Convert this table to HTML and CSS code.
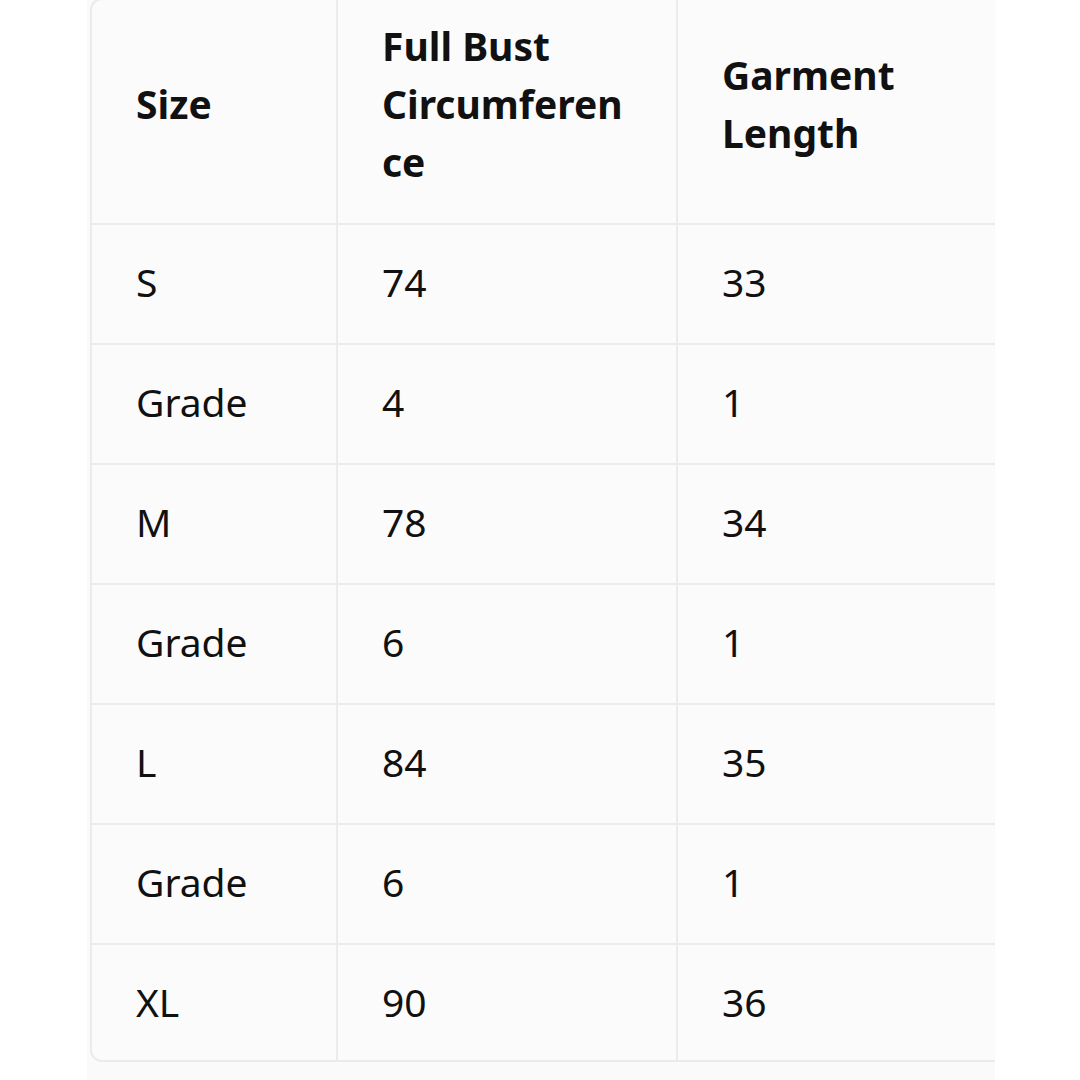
FILE: index.html
```html
<!DOCTYPE html>
<html>
<head>
<meta charset="utf-8">
<link rel="stylesheet" href="styles.css">
</head>
<body>
<div class="wrap">
  <table class="size-table">
    <colgroup>
      <col class="c1"><col class="c2"><col class="c3">
    </colgroup>
    <thead>
      <tr><th>Size</th><th>Full Bust Circumference</th><th>Garment Length</th></tr>
    </thead>
    <tbody>
      <tr><td>S</td><td>74</td><td>33</td></tr>
      <tr><td>Grade</td><td>4</td><td>1</td></tr>
      <tr><td>M</td><td>78</td><td>34</td></tr>
      <tr><td>Grade</td><td>6</td><td>1</td></tr>
      <tr><td>L</td><td>84</td><td>35</td></tr>
      <tr><td>Grade</td><td>6</td><td>1</td></tr>
      <tr><td>XL</td><td>90</td><td>36</td></tr>
    </tbody>
  </table>
</div>
</body>
</html>
```
FILE: styles.css
```css
html, body {
  margin: 0;
  padding: 0;
  background: #ffffff;
}
.wrap {
  margin-left: 87px;
  width: 908px;
  height: 1080px;
  overflow: hidden;
  background: #fafafa;
}
.size-table {
  margin-left: 3px;
  margin-top: -2px;
  width: 930px;
  table-layout: fixed;
  border-collapse: separate;
  border-spacing: 0;
  border: 2px solid #ebebeb;
  border-radius: 12px;
  background: #fbfbfb;
  font-family: "Noto Sans", "Open Sans", sans-serif;
  font-size: 39px;
  line-height: 58px;
  color: #111111;
}
.c1 { width: 246px; }
.c2 { width: 340px; }
.size-table th,
.size-table td {
  text-align: left;
  vertical-align: middle;
  padding: 0 44px;
  border-right: 2px solid #ebebeb;
  border-bottom: 2px solid #ebebeb;
  overflow-wrap: anywhere;
}
.size-table th:last-child,
.size-table td:last-child {
  border-right: none;
}
.size-table th {
  height: 207px;
  padding-bottom: 16px;
  font-weight: 700;
}
.size-table td {
  height: 114px;
  padding-bottom: 4px;
  font-weight: 400;
}
.size-table tbody tr:last-child td {
  border-bottom: none;
  height: 113px;
  padding-bottom: 2px;
}
```
